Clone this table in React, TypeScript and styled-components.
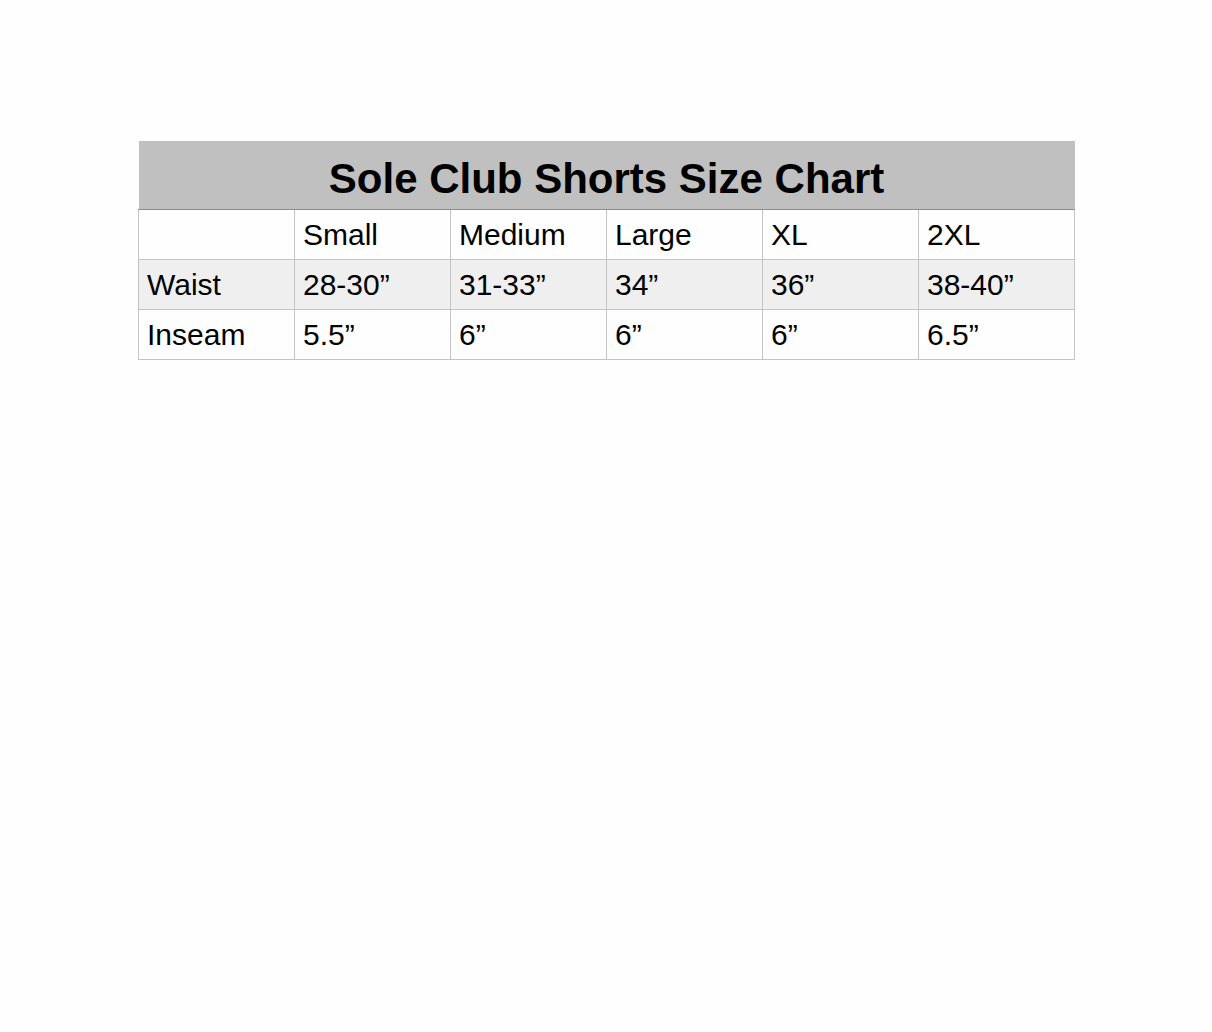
import React from "react"
import styled, { createGlobalStyle } from "styled-components"

const GlobalStyle = createGlobalStyle`
    html, body {
        margin: 0;
        padding: 0;
        background: #fefefe;
    }
    body {
        font-family: "Liberation Sans", Arial, sans-serif;
        color: #000;
    }
`

const sizes = ["Small", "Medium", "Large", "XL", "2XL"]

const rows = [
    { label: "Waist", values: ["28-30”", "31-33”", "34”", "36”", "38-40”"], shaded: true },
    { label: "Inseam", values: ["5.5”", "6”", "6”", "6”", "6.5”"], shaded: false },
]

const App = () => (
    <>
        <GlobalStyle />
        <Page>
            <Chart>
                <colgroup>
                    {[0, 1, 2, 3, 4, 5].map(c => <Col key={c} />)}
                </colgroup>
                <thead>
                    <tr>
                        <Title colSpan={6}>Sole Club Shorts Size Chart</Title>
                    </tr>
                </thead>
                <tbody>
                    <Row>
                        <Cell />
                        {sizes.map(s => <Cell key={s}>{s}</Cell>)}
                    </Row>
                    {rows.map(r => (
                        <Row key={r.label} shaded={r.shaded}>
                            <Cell>{r.label}</Cell>
                            {r.values.map((v, c) => <Cell key={c}>{v}</Cell>)}
                        </Row>
                    ))}
                </tbody>
            </Chart>
        </Page>
    </>
)

export default App

const Page = styled.div`
    padding: 141px 0 0 138px;
    min-height: 1032px;
    box-sizing: border-box;
`

const Chart = styled.table`
    border-collapse: collapse;
    table-layout: fixed;
    width: 937px;
`

const Col = styled.col`
    width: 156px;
`

const Title = styled.th`
    height: 68px;
    padding: 0;
    background: #bfc0bf;
    border-bottom: 1px solid #8c8c8c;
    font-size: 42px;
    font-weight: bold;
    text-align: center;
    vertical-align: middle;
    line-height: 1;
    padding-top: 8px;
    box-sizing: border-box;
`

const Row = styled.tr<{ shaded?: boolean }>`
    background: ${p => (p.shaded ? "#efefef" : "#fefefe")};
`

const Cell = styled.td`
    height: 50px;
    padding: 2px 8px 0;
    border: 1px solid #c4c4c4;
    font-size: 30px;
    line-height: 1;
    vertical-align: middle;
    box-sizing: border-box;
    white-space: nowrap;
`
